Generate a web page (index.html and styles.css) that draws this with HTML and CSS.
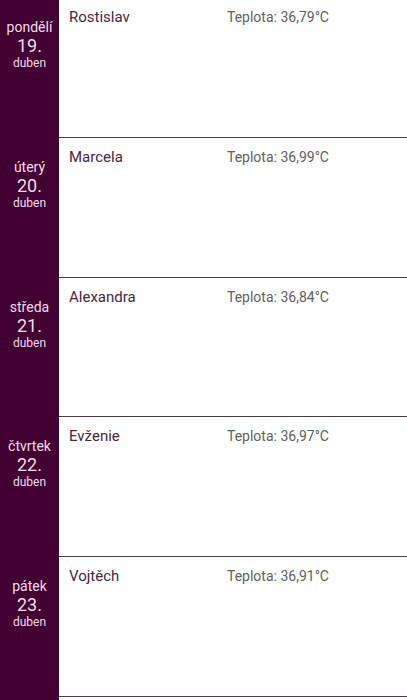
FILE: index.html
```html
<!DOCTYPE html>
<html lang="cs">
<head>
<meta charset="utf-8">
<link rel="stylesheet" href="styles.css">
</head>
<body>
<div class="list">
  <div class="row">
    <div class="date"><span class="dname">pondělí</span><span class="dnum">19.</span><span class="dmon">duben</span></div>
    <div class="content"><span class="name">Rostislav</span><span class="temp">Teplota: 36,79°C</span></div>
  </div>
  <div class="row">
    <div class="date"><span class="dname">úterý</span><span class="dnum">20.</span><span class="dmon">duben</span></div>
    <div class="content"><span class="name">Marcela</span><span class="temp">Teplota: 36,99°C</span></div>
  </div>
  <div class="row">
    <div class="date"><span class="dname">středa</span><span class="dnum">21.</span><span class="dmon">duben</span></div>
    <div class="content"><span class="name">Alexandra</span><span class="temp">Teplota: 36,84°C</span></div>
  </div>
  <div class="row">
    <div class="date"><span class="dname">čtvrtek</span><span class="dnum">22.</span><span class="dmon">duben</span></div>
    <div class="content"><span class="name">Evženie</span><span class="temp">Teplota: 36,97°C</span></div>
  </div>
  <div class="row">
    <div class="date"><span class="dname">pátek</span><span class="dnum">23.</span><span class="dmon">duben</span></div>
    <div class="content"><span class="name">Vojtěch</span><span class="temp">Teplota: 36,91°C</span></div>
  </div>
  <div class="row">
    <div class="date"></div>
    <div class="content"></div>
  </div>
</div>
</body>
</html>
```
FILE: styles.css
```css
html, body {
  margin: 0;
  padding: 0;
  background: #ffffff;
  overflow: hidden;
  height: 700px;
}
body {
  font-family: Roboto, "Noto Sans", sans-serif;
}
.list {
  margin-top: -2px;
  display: flex;
  flex-direction: column;
}
.row {
  display: flex;
  height: 139.75px;
  box-sizing: border-box;
}
.date {
  width: 59px;
  flex: none;
  background: #420032;
  color: #f3dcec;
  display: flex;
  flex-direction: column;
  align-items: center;
  padding-top: 21px;
  box-sizing: border-box;
}
.dname {
  font-size: 14px;
  line-height: 16px;
}
.dnum {
  font-size: 18px;
  line-height: 21px;
}
.dmon {
  font-size: 12px;
  line-height: 14px;
}
.content {
  flex: 1;
  display: flex;
  align-items: baseline;
  padding: 10px 0 0 10px;
  border-bottom: 1px solid #4a3a45;
  box-sizing: border-box;
}
.name {
  width: 158px;
  flex: none;
  font-size: 15px;
  line-height: 18px;
  color: #4a2341;
}
.temp {
  font-size: 14px;
  line-height: 18px;
  color: #606060;
}
```
